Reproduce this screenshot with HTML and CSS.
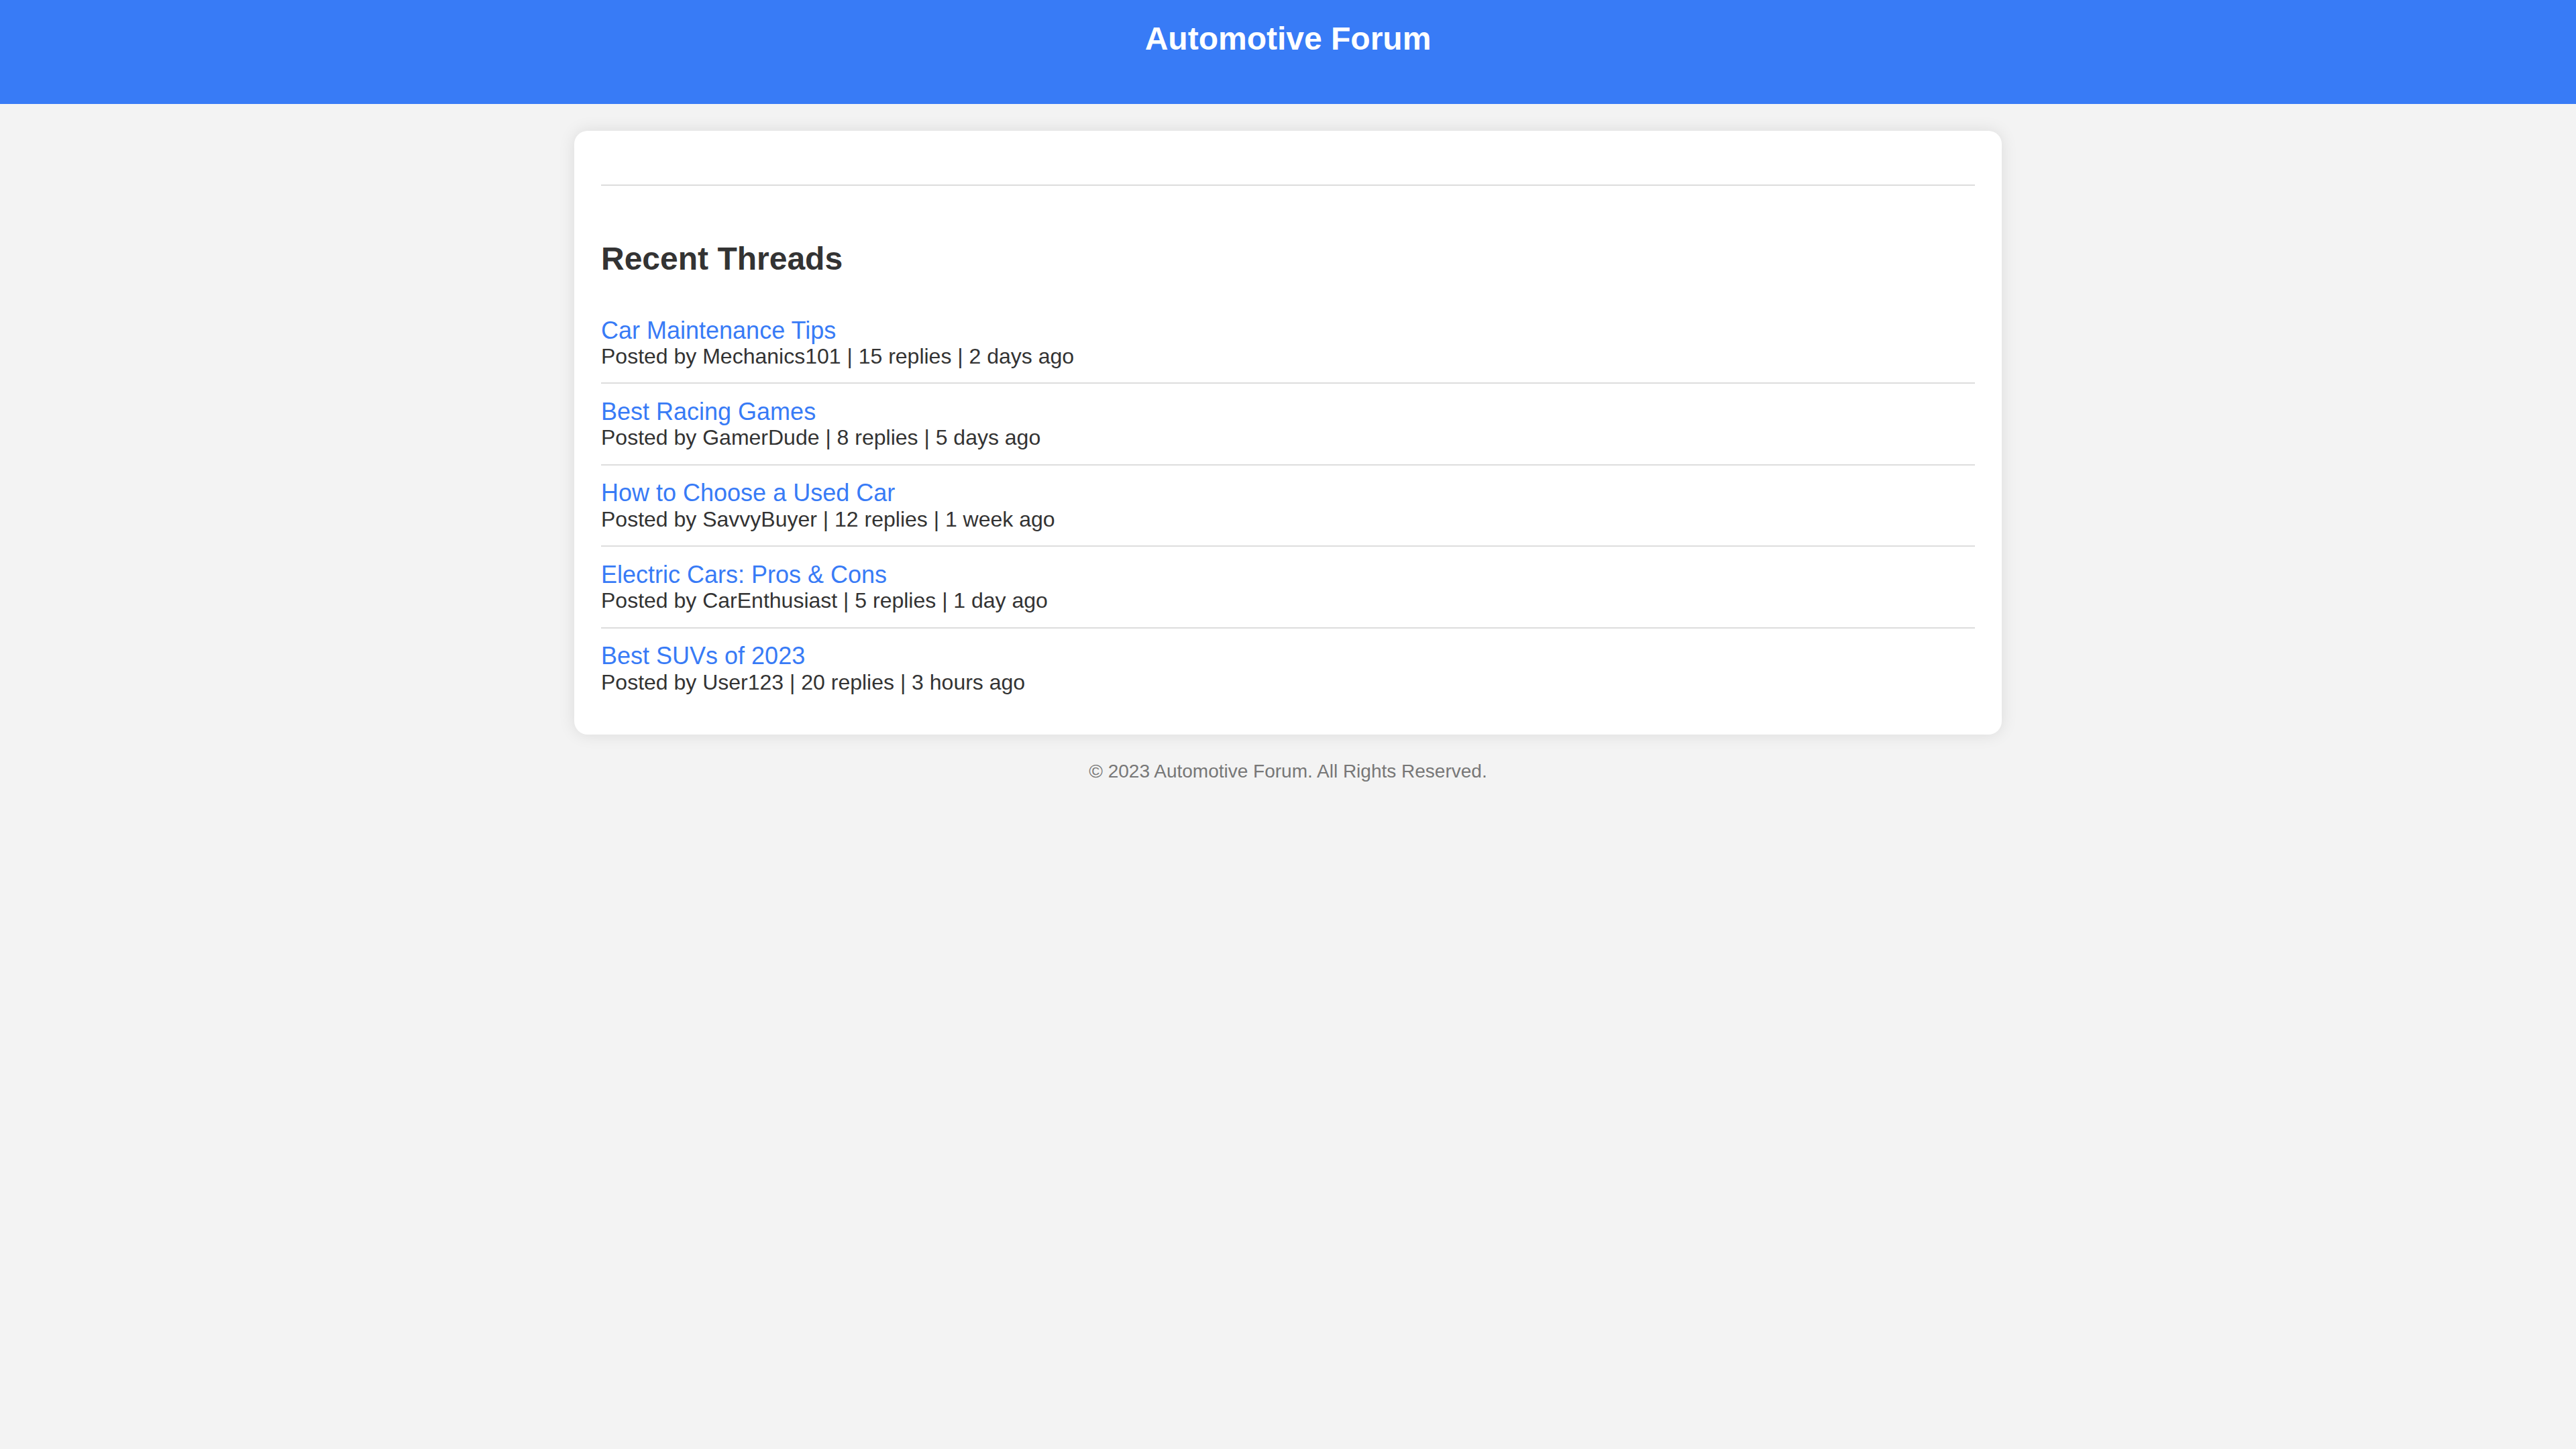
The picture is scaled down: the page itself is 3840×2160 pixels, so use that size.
FILE: index.html
```html
<!DOCTYPE html>
<html lang="en">
<head>
<meta charset="utf-8">
<title>Automotive Forum</title>
<link rel="stylesheet" href="styles.css">
</head>
<body>
<header class="site-header">
  <h1 class="site-title">Automotive Forum</h1>
</header>
<main class="card">
  <div class="toolbar"></div>
  <h2 class="section-title">Recent Threads</h2>
  <ul class="threads">
    <li class="thread">
      <a class="thread-title" href="#">Car Maintenance Tips</a>
      <div class="thread-meta">Posted by Mechanics101 | 15 replies | 2 days ago</div>
    </li>
    <li class="thread">
      <a class="thread-title" href="#">Best Racing Games</a>
      <div class="thread-meta">Posted by GamerDude | 8 replies | 5 days ago</div>
    </li>
    <li class="thread">
      <a class="thread-title" href="#">How to Choose a Used Car</a>
      <div class="thread-meta">Posted by SavvyBuyer | 12 replies | 1 week ago</div>
    </li>
    <li class="thread">
      <a class="thread-title" href="#">Electric Cars: Pros &amp; Cons</a>
      <div class="thread-meta">Posted by CarEnthusiast | 5 replies | 1 day ago</div>
    </li>
    <li class="thread">
      <a class="thread-title" href="#">Best SUVs of 2023</a>
      <div class="thread-meta">Posted by User123 | 20 replies | 3 hours ago</div>
    </li>
  </ul>
</main>
<footer class="site-footer">© 2023 Automotive Forum. All Rights Reserved.</footer>
</body>
</html>
```
FILE: styles.css
```css
html, body {
  margin: 0;
  padding: 0;
}
body {
  background: #f3f3f3;
  font-family: "Liberation Sans", Arial, sans-serif;
  color: #333;
}
.site-header {
  background: #387bf6;
  height: 155px;
  box-sizing: border-box;
  padding-top: 30px;
}
.site-title {
  margin: 0;
  text-align: center;
  color: #fff;
  font-size: 48px;
  font-weight: bold;
  line-height: 56px;
}
.card {
  display: block;
  width: 2128px;
  box-sizing: border-box;
  margin: 40px auto 0;
  background: #fff;
  border-radius: 20px;
  padding: 40px 40px 39px;
  box-shadow: 0 0 24px rgba(0, 0, 0, 0.1);
}
.toolbar {
  height: 40px;
  border-bottom: 2px solid #ddd;
  margin-bottom: 81px;
}
.section-title {
  margin: 0 0 38px;
  font-size: 48px;
  font-weight: bold;
  line-height: 55px;
  color: #333;
}
.threads {
  list-style: none;
  margin: 0;
  padding: 0;
}
.thread {
  padding: 20.6px 0;
  border-bottom: 2px solid #ddd;
}
.thread:last-child {
  border-bottom: none;
}
.thread-title {
  display: block;
  color: #387bf6;
  text-decoration: none;
  font-size: 36px;
  line-height: 41.4px;
}
.thread-meta {
  font-size: 32px;
  line-height: 36.8px;
  color: #333;
}
.site-footer {
  margin-top: 39px;
  text-align: center;
  color: #777;
  font-size: 28px;
  line-height: 32px;
}
```
